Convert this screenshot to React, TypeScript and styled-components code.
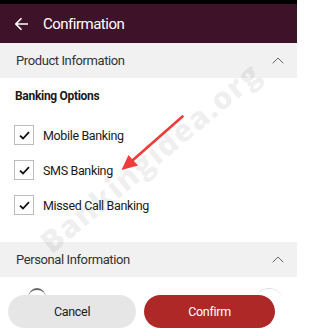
import styled, { createGlobalStyle } from 'styled-components';

const GlobalStyle = createGlobalStyle`
  body {
    margin: 0;
    background: #ffffff;
    font-family: Roboto, "Liberation Sans", sans-serif;
  }
`;

const options = ['Mobile Banking', 'SMS Banking', 'Missed Call Banking'];

const ChevronUp = () => (
  <svg width="12" height="7" viewBox="0 0 12 7">
    <path d="M0.7 6.3 L6 1 L11.3 6.3" fill="none" stroke="#666" strokeWidth="1" />
  </svg>
);

const App = () => {
  return (
    <SScreen>
      <GlobalStyle />
      <SStatus />
      <SHeader>
        <svg width="15" height="14" viewBox="0 0 15 14">
          <path d="M14 7 H2 M7.5 1.3 L1.8 7 L7.5 12.7" fill="none" stroke="#fff" strokeWidth="1.6" />
        </svg>
        <STitle>Confirmation</STitle>
      </SHeader>
      <SSectionBar>
        <span>Product Information</span>
        <ChevronUp />
      </SSectionBar>
      <SBody>
        <SGroupTitle>Banking Options</SGroupTitle>
        <SOptionList>
          {options.map((label) => (
            <SOption key={label}>
              <SCheckBox>
                <svg width="11" height="9" viewBox="0 0 11 9">
                  <path d="M1 4.6 L4 7.5 L10 1.2" fill="none" stroke="#111" strokeWidth="1.8" />
                </svg>
              </SCheckBox>
              <span>{label}</span>
            </SOption>
          ))}
        </SOptionList>
      </SBody>
      <SSectionBar>
        <span>Personal Information</span>
        <ChevronUp />
      </SSectionBar>
      <SPeek>
        <SPeekDot />
        <SPeekLine />
      </SPeek>
      <SFooter>
        <SButton>Cancel</SButton>
        <SButton $primary>Confirm</SButton>
      </SFooter>
      <SWatermark>Bankingidea.org</SWatermark>
      <SArrow width="297" height="336" viewBox="0 0 297 336">
        <path d="M182.5 116.5 L133 160" stroke="#ef3b3b" strokeWidth="2.6" strokeLinecap="round" />
        <path d="M121.5 170 L128.5 155 L138 165.5 Z" fill="#ef3b3b" />
      </SArrow>
    </SScreen>
  );
};
export default App;

const SScreen = styled.div`
  position: relative;
  width: 297px;
  height: 336px;
  overflow: hidden;
  background: #ffffff;
`;

const SStatus = styled.div`
  height: 4px;
  background: #000000;
`;

const SHeader = styled.div`
  height: 39px;
  background: #3e1229;
  display: flex;
  align-items: center;
  padding-left: 14px;
  gap: 14px;
`;

const STitle = styled.div`
  color: #ffffff;
  font-size: 15px;
  letter-spacing: -0.5px;
`;

const SSectionBar = styled.div`
  height: 35px;
  background: #f1f1f1;
  display: flex;
  align-items: center;
  justify-content: space-between;
  padding: 0 13px 0 16px;
  font-size: 13px;
  letter-spacing: -0.4px;
  color: #333333;
`;

const SBody = styled.div`
  padding: 10px 15px 27px 14px;
`;

const SGroupTitle = styled.div`
  font-weight: 700;
  font-size: 12px;
  letter-spacing: -0.3px;
  line-height: 17px;
  color: #1a1a1a;
  margin-left: 1px;
`;

const SOptionList = styled.div`
  display: flex;
  flex-direction: column;
  gap: 15px;
  margin-top: 20px;
`;

const SOption = styled.div`
  display: flex;
  align-items: center;
  gap: 9px;
  font-size: 12.5px;
  letter-spacing: -0.35px;
  color: #1a1a1a;
`;

const SCheckBox = styled.div`
  width: 18px;
  height: 18px;
  border: 1px solid #bdbdbd;
  display: flex;
  align-items: center;
  justify-content: center;
`;

const SPeek = styled.div`
  display: flex;
  justify-content: space-between;
  padding: 11px 16px 0 28px;
`;

const SPeekDot = styled.div`
  width: 18px;
  height: 18px;
  border-radius: 50%;
  border-top: 2px solid #666;
`;

const SPeekLine = styled.div`
  width: 24px;
  height: 18px;
  border-radius: 50%;
  border-top: 1px solid #ddd;
`;

const SFooter = styled.div`
  position: absolute;
  left: 0;
  right: 0;
  top: 295px;
  display: flex;
  gap: 8px;
  padding: 0 22px 0 8px;
`;

const SButton = styled.button<{ $primary?: boolean }>`
  flex: ${(p) => (p.$primary ? '131px' : '128px')} 0 0;
  height: 33px;
  border: none;
  border-radius: 17px;
  font-family: Roboto, "Liberation Sans", sans-serif;
  font-size: 12.5px;
  letter-spacing: -0.3px;
  background: ${(p) => (p.$primary ? '#ad2826' : '#e6e6e6')};
  color: ${(p) => (p.$primary ? '#ffffff' : '#1a1a1a')};
`;

const SWatermark = styled.div`
  position: absolute;
  left: 150px;
  top: 157px;
  transform: translate(-50%, -50%) rotate(-40deg);
  font-family: "Open Sans", Roboto, sans-serif;
  font-weight: 800;
  font-size: 31px;
  letter-spacing: 1px;
  white-space: nowrap;
  color: rgba(0, 0, 0, 0.06);
  pointer-events: none;
`;

const SArrow = styled.svg`
  position: absolute;
  left: 0;
  top: 0;
  pointer-events: none;
`;
